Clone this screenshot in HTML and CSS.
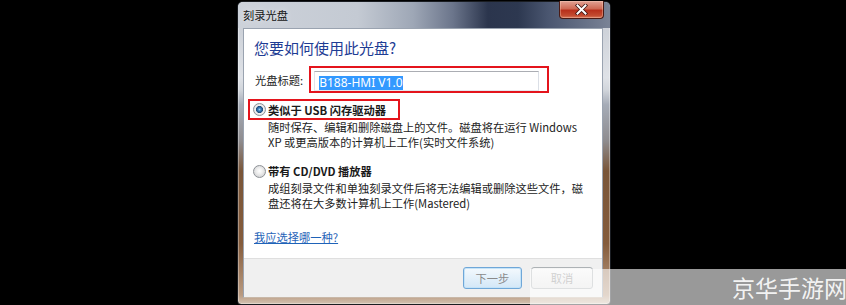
FILE: index.html
```html
<!DOCTYPE html>
<html lang="zh-CN">
<head>
    <meta charset="UTF-8">
    <title>刻录光盘</title>
    <link rel="stylesheet" href="styles.css">
</head>
<body>
    <div class="stage">
        <div class="dialog">
            <div class="titlebar">
                <span class="title">刻录光盘</span>
                <button class="close-btn" aria-label="关闭">
                    <svg width="13" height="11" viewBox="0 0 13 11">
                        <path d="M2.5 1.5 L10.5 9.5 M10.5 1.5 L2.5 9.5" stroke="#3b1512" stroke-width="3.6" stroke-linecap="square"/>
                        <path d="M2.5 1.5 L10.5 9.5 M10.5 1.5 L2.5 9.5" stroke="#ffffff" stroke-width="2" stroke-linecap="square"/>
                    </svg>
                </button>
            </div>
            <div class="client">
                <div class="content">
                    <h1 class="instruction">您要如何使用此光盘?</h1>

                    <div class="title-row">
                        <span class="field-label">光盘标题:</span>
                        <div class="mark mark-input">
                            <div class="textbox"><span class="selected">B188-HMI V1.0</span></div>
                        </div>
                    </div>

                    <div class="mark mark-option">
                        <span class="radio checked"></span>
                        <span class="option-label">类似于 USB 闪存驱动器</span>
                    </div>
                    <p class="option-desc">随时保存、编辑和删除磁盘上的文件。磁盘将在运行 Windows<br>XP 或更高版本的计算机上工作(实时文件系统)</p>

                    <div class="option-row">
                        <span class="radio"></span>
                        <span class="option-label">带有 CD/DVD 播放器</span>
                    </div>
                    <p class="option-desc">成组刻录文件和单独刻录文件后将无法编辑或删除这些文件，磁<br>盘还将在大多数计算机上工作(Mastered)</p>

                    <a href="#" class="help-link">我应选择哪一种?</a>
                </div>
                <div class="footer">
                    <button class="btn btn-default" disabled>下一步</button>
                    <button class="btn" disabled>取消</button>
                </div>
            </div>
        </div>
        <div class="watermark">京华手游网</div>
    </div>
</body>
</html>
```

FILE: styles.css
```css
* {
    margin: 0;
    padding: 0;
    box-sizing: border-box;
}

body {
    background: #000;
    font-family: "Noto Sans CJK SC", sans-serif;
    font-size: 11.25px;
    color: #1c1c1c;
    overflow: hidden;
}

.stage {
    position: relative;
    height: 305px;
    overflow: hidden;
    display: flex;
    justify-content: center;
    padding-top: 1px;
}

.dialog {
    width: 374px;
    height: 304px;
    margin-left: 2px;
    display: flex;
    flex-direction: column;
    border: 1px solid #1a1d22;
    border-radius: 6px 6px 4px 4px;
    background: linear-gradient(180deg, #c4c9d1 0, #dfe2e7 25%, #d2d6dc 29%, #a6acb7 34%, #8e8c8f 46%, #7a5639 56%, #855c3c 80%, #b99a80 97%, #d3c2b2 100%);
    box-shadow: inset 0 0 0 1px rgba(255, 255, 255, 0.35);
}

.titlebar {
    height: 26px;
    display: flex;
    justify-content: space-between;
    align-items: flex-start;
    padding-left: 5px;
    border-radius: 5px 5px 0 0;
    background: linear-gradient(90deg, #cdd2da 0, #c4cad3 120px, #9ea7b6 175px, #6b758b 215px, #2b354d 250px, #2d3850 280px, #4a5670 310px, #7a8396 372px);
}

.title {
    padding-top: 5px;
    line-height: 16px;
    color: #141414;
    text-shadow: 0 0 6px rgba(255, 255, 255, 0.6);
}

.close-btn {
    width: 45px;
    height: 18px;
    margin-top: -1px;
    margin-right: 6px;
    display: flex;
    align-items: center;
    justify-content: center;
    border: 1px solid #4a1a14;
    border-top: none;
    border-radius: 0 0 4px 4px;
    background: linear-gradient(180deg, #e2a395 0, #cf6a55 45%, #b8301c 55%, #c24a2f 85%, #d8785c 100%);
    box-shadow: inset 0 0 0 1px rgba(255, 220, 200, 0.35);
}

.client {
    flex: 1;
    margin: 0 7px 6px 5px;
    display: flex;
    flex-direction: column;
    background: #fff;
    border: 1px solid #9aa3b0;
    border-bottom-color: #c8b8a8;
}

.content {
    flex: 1;
    padding: 9px 0 0 10px;
}

.instruction {
    font-size: 15px;
    font-weight: normal;
    line-height: 20px;
    color: #1e3c94;
}

.title-row {
    display: flex;
    align-items: center;
    gap: 6px;
    margin-top: 8px;
    height: 27px;
}

.field-label {
    margin-left: 1px;
    color: #222;
}

.mark {
    border: 2px solid #e4141c;
}

.mark-input {
    padding: 3px 8px 0 3px;
}

.textbox {
    width: 225px;
    height: 20px;
    padding: 2px 0 0 4px;
    border: 1px solid #abadb3;
    border-color: #abadb3 #dbdfe6 #e3e9ef #e2e3ea;
}

.selected {
    display: inline-block;
    font-family: "Noto Sans", sans-serif;
    font-size: 12px;
    line-height: 14px;
    background: #3399ff;
    color: #fff;
}

.mark-option {
    display: inline-flex;
    align-items: center;
    gap: 2px;
    height: 21px;
    margin: 6px 0 0 -6px;
    padding: 0 12px 0 3px;
}

.radio {
    width: 13px;
    height: 13px;
    flex-shrink: 0;
    border-radius: 50%;
    border: 1px solid #8d9196;
    background: radial-gradient(circle at 50% 45%, #ffffff 0, #eeeeee 3px, #d6d7d8 6px);
}

.radio.checked {
    background: radial-gradient(circle at 50% 50%, #9fd4f5 0, #3d7fbb 1.5px, #1d4a78 3.3px, #f4f4f4 3.8px, #dcdcdc 6px);
}

.option-label {
    font-weight: bold;
    color: #1a1a1a;
    line-height: 16px;
}

.option-desc {
    padding-left: 14px;
    line-height: 15px;
    color: #222;
}

.option-row {
    display: flex;
    align-items: center;
    gap: 2px;
    height: 20px;
    margin: 11px 0 0 -1px;
}

.help-link {
    display: inline-block;
    margin-top: 19px;
    line-height: 15px;
    color: #1f63b8;
    text-decoration: underline;
}

.footer {
    height: 39px;
    display: flex;
    justify-content: flex-end;
    gap: 9px;
    padding: 8px 9px 0 0;
    background: #f0f0f0;
    border-top: 1px solid #dfdfdf;
}

.btn {
    width: 62px;
    height: 22px;
    font-family: "Noto Sans CJK SC", sans-serif;
    font-size: 11.25px;
    color: #8a8a8a;
    border: 1px solid #adb2b5;
    border-radius: 3px;
    background: linear-gradient(180deg, #f6f6f6 0, #ececec 50%, #e3e3e3 100%);
}

.btn-default {
    width: 59px;
    border-color: #6fa7d8;
    background: linear-gradient(180deg, #f4f9fd 0, #e3f0fa 50%, #d3e7f7 100%);
    box-shadow: inset 0 0 0 1px #c4e3f8;
}

.watermark {
    position: absolute;
    left: 530px;
    right: 0;
    top: 269px;
    bottom: 0;
    padding-left: 202px;
    background: rgba(255, 255, 255, 0.6);
    color: rgba(255, 255, 255, 0.9);
    font-size: 23px;
    line-height: 36px;
    white-space: nowrap;
    overflow: hidden;
}
```
